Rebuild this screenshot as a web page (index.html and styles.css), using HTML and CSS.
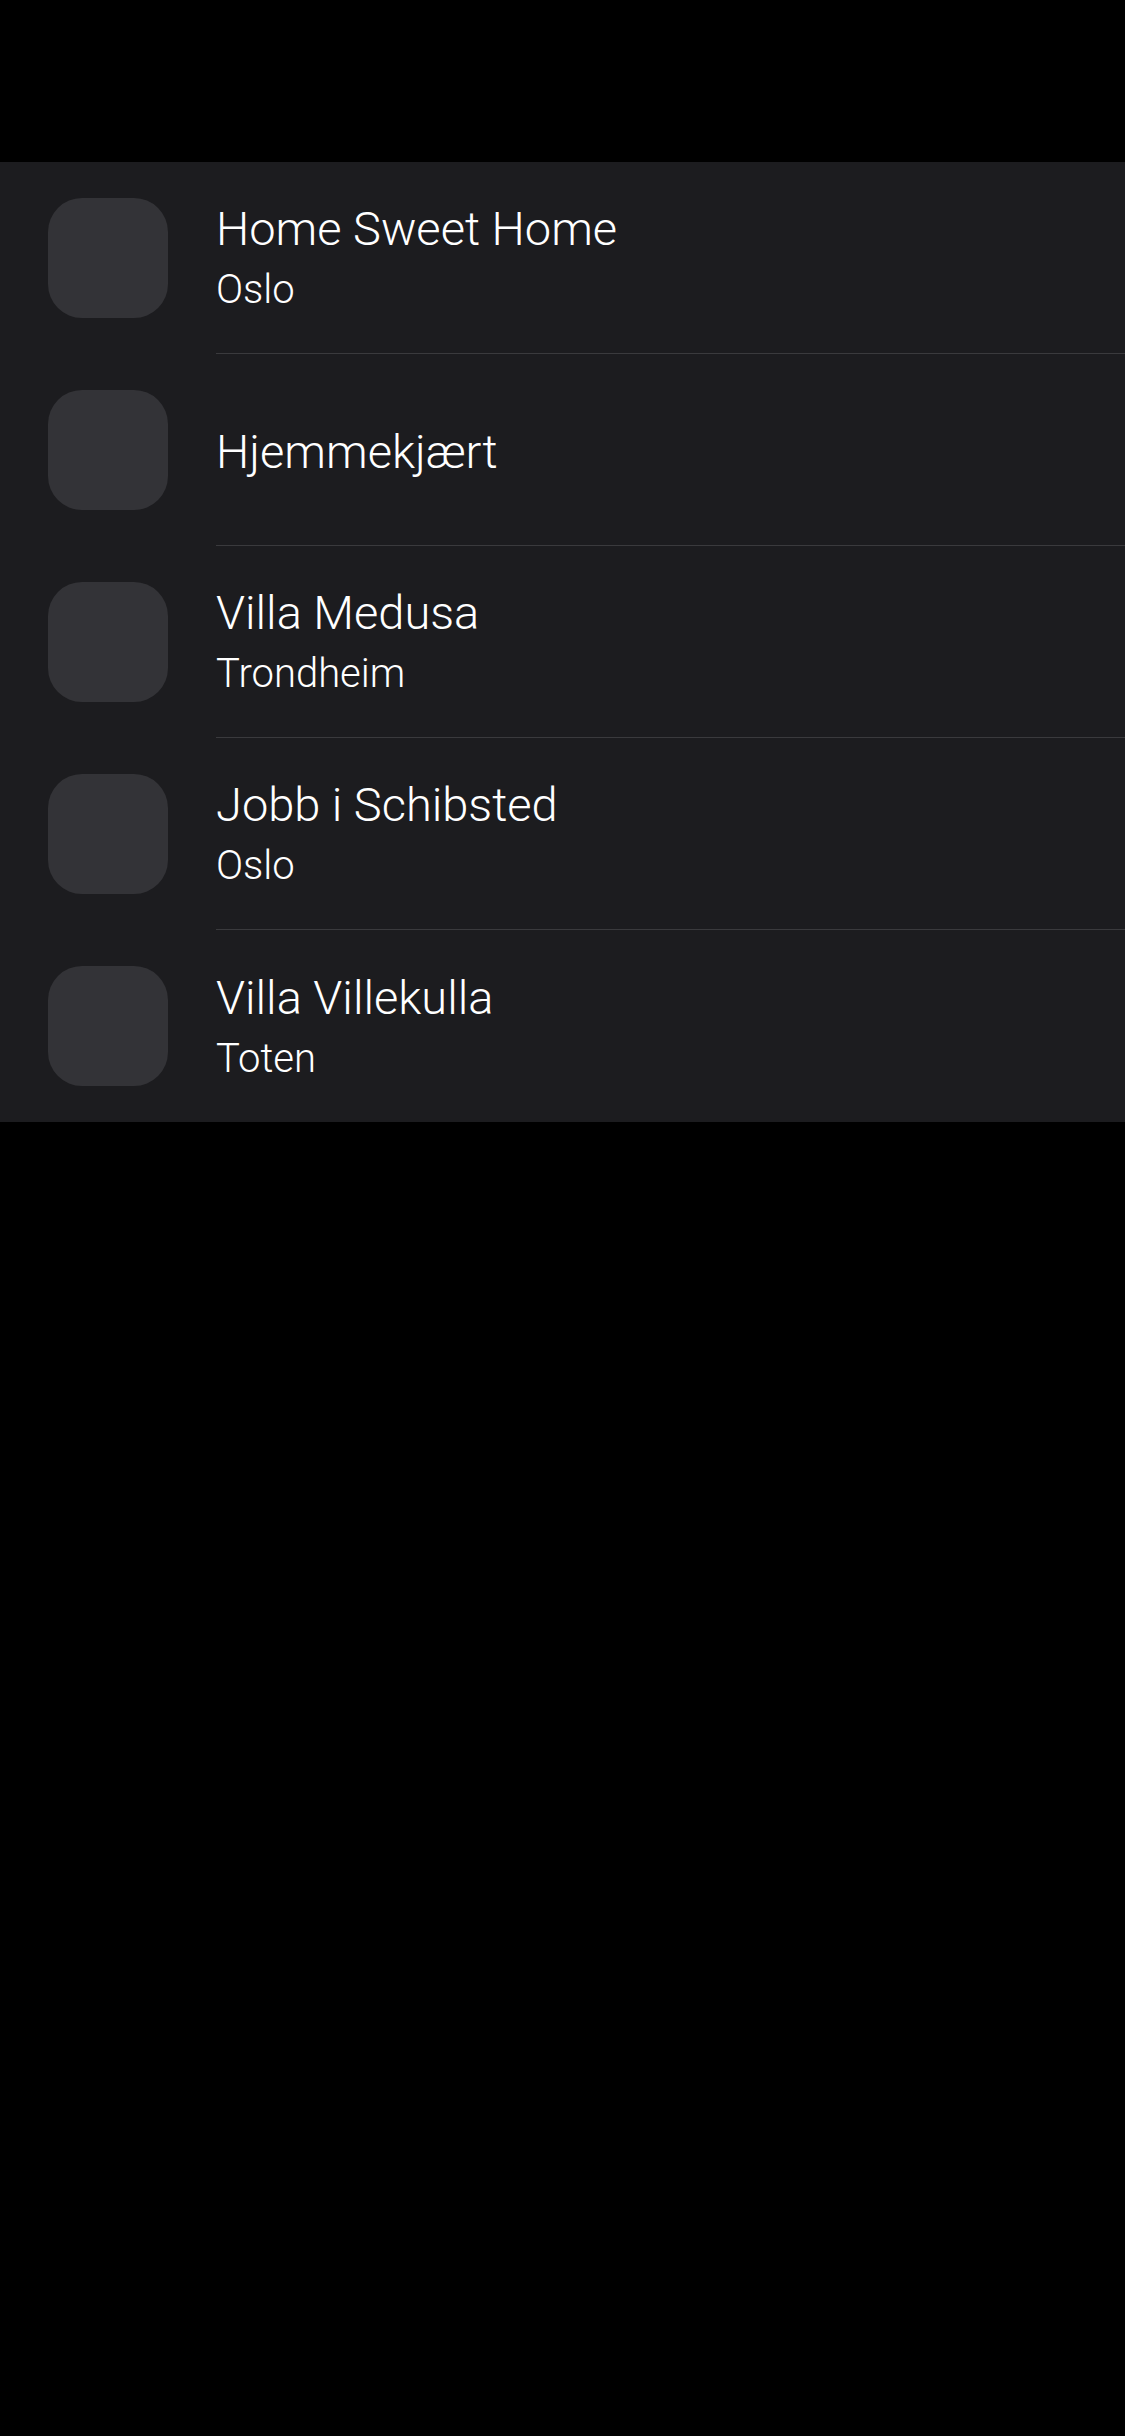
FILE: index.html
```html
<!DOCTYPE html>
<html>
<head>
<meta charset="utf-8">
<link rel="stylesheet" href="styles.css">
</head>
<body>
<div class="top"></div>
<ul class="list">
  <li class="row"><div class="thumb"></div><div class="text"><div class="title">Home Sweet Home</div><div class="sub">Oslo</div></div></li>
  <li class="row"><div class="thumb"></div><div class="text"><div class="title">Hjemmekjært</div></div></li>
  <li class="row"><div class="thumb"></div><div class="text"><div class="title">Villa Medusa</div><div class="sub">Trondheim</div></div></li>
  <li class="row"><div class="thumb"></div><div class="text"><div class="title">Jobb i Schibsted</div><div class="sub">Oslo</div></div></li>
  <li class="row"><div class="thumb"></div><div class="text"><div class="title">Villa Villekulla</div><div class="sub">Toten</div></div></li>
</ul>
</body>
</html>
```
FILE: styles.css
```css
html, body {
  margin: 0;
  padding: 0;
  background: #000;
}
body {
  width: 1125px;
  min-height: 2436px;
  font-family: Roboto, "Liberation Sans", sans-serif;
  color: #fff;
}
.top {
  height: 162px;
}
.list {
  list-style: none;
  margin: 0;
  padding: 0;
  background: #1c1c1f;
}
.row {
  display: flex;
  align-items: stretch;
  height: 192px;
}
.thumb {
  flex: 0 0 120px;
  height: 120px;
  margin: 36px 48px 0 48px;
  background: #333337;
  border-radius: 34px;
}
.text {
  flex: 1;
  display: flex;
  flex-direction: column;
  justify-content: center;
  padding-top: 3px;
  border-bottom: 1px solid #3a3a3d;
  box-sizing: border-box;
}
.row:last-child .text {
  border-bottom: none;
}
.title {
  font-size: 47px;
  font-weight: 300;
  line-height: 57px;
}
.sub {
  font-size: 40px;
  font-weight: 300;
  line-height: 57px;
  margin-top: 4px;
}
```
